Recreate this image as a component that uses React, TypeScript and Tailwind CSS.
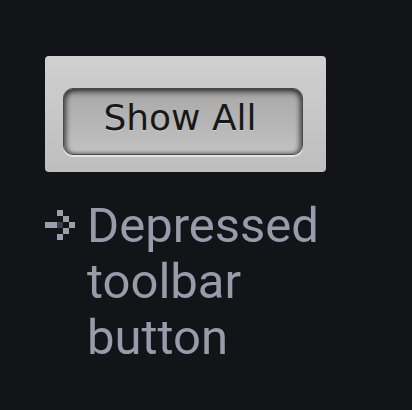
import React from "react";

function Arrow() {
  const light = "#9d9dab";
  const cells: [number, number, string][] = [
    [0, 2, light],
    [1, 2, light],
    [2, 0, light],
    [3, 1, light],
    [4, 2, light],
    [3, 3, light],
    [2, 4, light],
    [2, 2, "#3c3c46"],
  ];
  return (
    <svg width="30" height="30" viewBox="0 0 30 30" className="shrink-0 mt-[12px]" shapeRendering="crispEdges">
      {cells.map(([c, r, f], i) => (
        <rect key={i} x={c * 6} y={r * 6} width="6" height="6" fill={f} />
      ))}
    </svg>
  );
}

export default function App() {
  return (
    <div className="w-[412px] h-[410px] bg-[#131417] overflow-hidden pt-[56px] pl-[45px]">
      <div className="w-[281px] h-[116px] rounded-[4px] bg-gradient-to-b from-[#d0d0d0] to-[#bebebe] pt-[32px] pl-[18px]">
        <div className="w-[240px] h-[67px] rounded-[10px] border border-[#4a4a4a] bg-gradient-to-b from-[#a8a8a8] to-[#c2c2c2] shadow-[inset_0_3px_6px_rgba(0,0,0,0.6),inset_3px_0_4px_rgba(0,0,0,0.3),inset_-3px_0_4px_rgba(0,0,0,0.3),0_2px_0_rgba(255,255,255,0.6)] flex items-center justify-center pb-[7px] pr-[6px]">
          <span className="font-['DejaVu_Sans',sans-serif] text-[36px] leading-none text-[#181818] [text-shadow:0_1px_0_rgba(255,255,255,0.35)]">
            Show All
          </span>
        </div>
      </div>
      <div className="mt-[26px] flex">
        <Arrow />
        <div className="ml-[12px] font-['Roboto',sans-serif] text-[49px] leading-[56px] text-[#9a9aab]">
          Depressed
          <br />
          toolbar
          <br />
          button
        </div>
      </div>
    </div>
  );
}
